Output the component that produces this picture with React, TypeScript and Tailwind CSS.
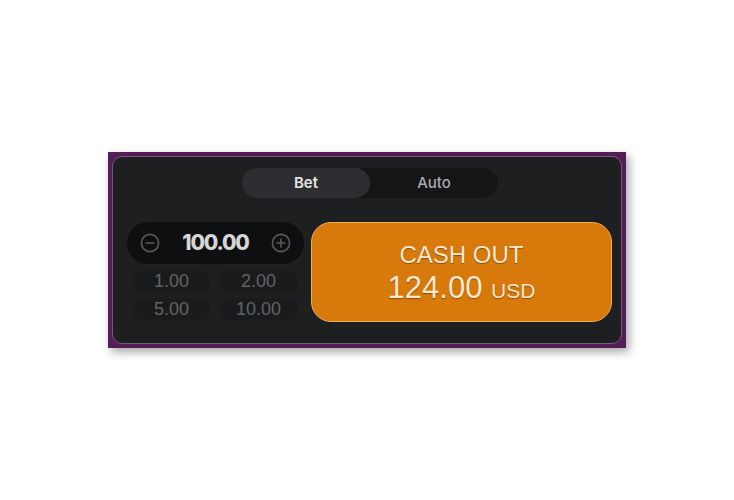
import React, { useState } from 'react'
import clsx from 'clsx'

const quickAmounts = ['1.00', '2.00', '5.00', '10.00']

const CircleIcon = ({ plus }: { plus?: boolean }) => (
  <svg width="20" height="20" viewBox="0 0 20 20" fill="none" stroke="#58595c" strokeWidth="1.6">
    <circle cx="10" cy="10" r="8.6" />
    <path d="M6 10h8" strokeLinecap="round" />
    {plus && <path d="M10 6v8" strokeLinecap="round" />}
  </svg>
)

const App = () => {
  const [tab, setTab] = useState<'bet' | 'auto'>('bet')
  const [amount, setAmount] = useState(100)

  return (
    <div className="w-[734px] h-[500px] bg-white pt-[152px] pl-[108px] font-['Inter',sans-serif]">
      <div className="w-[518px] h-[196px] bg-[#561c58] p-[4px] shadow-[3px_4px_9px_rgba(0,0,0,0.35)]">
        <div className="h-full rounded-[10px] border border-[#7a577c] bg-[#1e1f21] flex flex-col">
          <div className="pt-[11px] pl-[129px]">
            <div className="flex w-[256px] h-[30px] rounded-full bg-[#141517]">
              <button
                onClick={() => setTab('bet')}
                className={clsx(
                  'w-[128px] h-full rounded-full text-[15px] font-semibold text-[#e4e4e4]',
                  tab === 'bet' && 'bg-[#2d2e31]',
                )}
              >
                Bet
              </button>
              <button
                onClick={() => setTab('auto')}
                className={clsx(
                  'flex-1 h-full rounded-full text-[15px] font-medium text-[#a9aaad]',
                  tab === 'auto' && 'bg-[#2d2e31]',
                )}
              >
                Auto
              </button>
            </div>
          </div>

          <div className="flex gap-[7px] pt-[24px] pl-[14px] pr-[9px]">
            <div className="w-[177px] flex flex-col">
              <div className="h-[42px] rounded-full bg-[#0e0f10] flex items-center justify-between px-[13px]">
                <button onClick={() => setAmount((a) => Math.max(1, a - 1))}>
                  <CircleIcon />
                </button>
                <span className="text-[21px] font-extrabold tracking-[-1.2px] text-[#d6d6d6]">
                  {amount.toFixed(2)}
                </span>
                <button onClick={() => setAmount((a) => a + 1)}>
                  <CircleIcon plus />
                </button>
              </div>
              <div className="grid grid-cols-[77px_79px] gap-x-[9px] gap-y-[5px] px-[6px] pt-[6px]">
                {quickAmounts.map((q) => (
                  <button
                    key={q}
                    onClick={() => setAmount(parseFloat(q))}
                    className="h-[23px] rounded-full bg-[#1a1b1d] text-[18px] leading-[23px] text-[#626366] font-['Liberation_Sans',sans-serif]"
                  >
                    {q}
                  </button>
                ))}
              </div>
            </div>

            <button className="w-[301px] h-[100px] pt-[4px] rounded-[20px] bg-[#d7790b] border border-[#f2ad58] flex flex-col items-center justify-center font-['Liberation_Sans',sans-serif] text-[#fbe9cf] [text-shadow:0_1px_1px_rgba(90,40,0,0.55)]">
              <span className="text-[24px] leading-[30px]">CASH OUT</span>
              <span className="text-[31px] leading-[36px]">
                124.00 <span className="text-[21px]">USD</span>
              </span>
            </button>
          </div>
        </div>
      </div>
    </div>
  )
}

export default App
